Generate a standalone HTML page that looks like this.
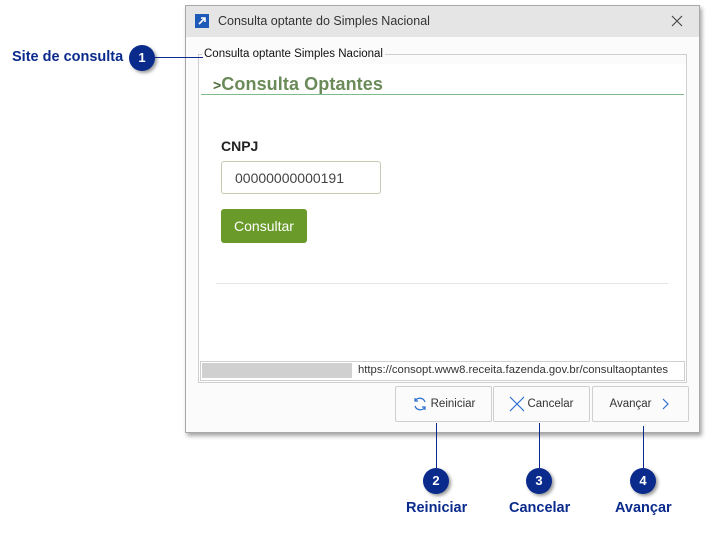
<!DOCTYPE html>
<html><head><style>
*{margin:0;padding:0;box-sizing:border-box}
body{width:723px;height:535px;background:#fff;position:relative;font-family:"Liberation Sans",sans-serif;overflow:hidden}
.a{position:absolute}
.dlg{left:185px;top:5px;width:515px;height:428px;background:#fbfbfb;border:1px solid #a8a8a8;box-shadow:2px 3px 4px rgba(0,0,0,.35)}
.tb{left:0;top:0;width:513px;height:31px;background:#e5e5e5}
.bub{width:26px;height:26px;border-radius:50%;background:#0a2a8c;color:#fff;font-weight:bold;font-size:13px;text-align:center;line-height:26px;box-shadow:2px 2px 3px rgba(0,0,0,.4)}
.lbl{color:#0a2a8c;font-weight:bold;font-size:14.5px}
.btn{top:381px;height:36px;background:#fbfbfb;border:1px solid #cfcfcf;border-radius:2px;font-size:11.5px;color:#333;display:flex;align-items:center;justify-content:center}
.vl{width:1px;background:#0a2a8c}
</style></head><body>
<div class="a dlg">
 <div class="a tb"></div>
 <div class="a" style="left:9px;top:8px;width:14px;height:14px;background:#1e5bb8"><svg width="14" height="14"><path d="M4 10 L10 4 M6 4 H10 V8" stroke="#fff" stroke-width="1.6" fill="none"/></svg></div>
 <div class="a" style="left:32px;top:8px;font-size:12.5px;color:#333">Consulta optante do Simples Nacional</div>
 <svg class="a" style="left:485px;top:9px" width="12" height="12"><path d="M1 1L11 11M11 1L1 11" stroke="#444" stroke-width="1.1"/></svg>
 <div class="a" style="left:12px;top:48px;width:489px;height:329px;border:1px solid #cfcfcf"></div>
 <div class="a" style="left:13px;top:58px;width:487px;height:318px;background:#fff"></div>
 <div class="a" style="left:16px;top:42px;background:#fbfbfb;padding:0 2px;font-size:11.5px;color:#111">Consulta optante Simples Nacional</div>
 <div class="a" style="left:27px;top:68px;font-size:18px;font-weight:bold;color:#6b8a5a;letter-spacing:0.1px"><span style="font-size:14px;color:#4a6a3a">&gt;</span>Consulta Optantes</div>
 <div class="a" style="left:15px;top:88px;width:483px;height:1px;background:#7fba88"></div>
 <div class="a" style="left:35px;top:132px;font-size:14px;font-weight:bold;color:#222">CNPJ</div>
 <div class="a" style="left:35px;top:155px;width:160px;height:33px;border:1px solid #c3ccb3;border-radius:3px;background:#fff;font-size:14px;color:#444;padding:8px 13px">00000000000191</div>
 <div class="a" style="left:35px;top:203px;width:86px;height:34px;background:#6a9a2a;border-radius:3px;color:#fff;font-size:14px;text-align:center;line-height:34px">Consultar</div>
 <div class="a" style="left:30px;top:277px;width:452px;height:1px;background:#e5e5e5"></div>
 <div class="a" style="left:14px;top:355px;width:485px;height:20px;border:1px solid #d0d0d0;background:#fff"></div>
 <div class="a" style="left:16px;top:357px;width:150px;height:15px;background:#d0d0d0"></div>
 <div class="a" style="left:172px;top:358px;font-size:11.3px;color:#333">https://consopt.www8.receita.fazenda.gov.br/consultaoptantes</div>
</div>
<div class="a btn" style="left:395px;top:386px;width:97px"><svg width="16" height="16" style="margin-right:3px"><path d="M13 6A5.5 5.5 0 0 0 3 5M3 10A5.5 5.5 0 0 0 13 11M3 2V5H6M13 14V11H10" stroke="#2a6fd0" stroke-width="1.2" fill="none"/></svg>Reiniciar</div>
<div class="a btn" style="left:493px;top:386px;width:97px"><svg width="16" height="16" style="margin-right:2px"><path d="M1 1L15 15M15 1L1 15" stroke="#2a6fd0" stroke-width="1.2"/></svg>Cancelar</div>
<div class="a btn" style="left:592px;top:386px;width:97px">Avançar<svg width="10" height="12" style="margin-left:10px"><path d="M2 1L7 6L2 11" stroke="#2a6fd0" stroke-width="1.2" fill="none"/></svg></div>
<div class="a lbl" style="left:12px;top:49px">Site de consulta</div>
<div class="a bub" style="left:129px;top:45px">1</div>
<div class="a" style="left:155px;top:57px;width:48px;height:1px;background:#0a2a8c"></div>
<div class="a vl" style="left:436px;top:423px;height:45px"></div>
<div class="a vl" style="left:539px;top:423px;height:45px"></div>
<div class="a vl" style="left:643px;top:426px;height:42px"></div>
<div class="a bub" style="left:423px;top:468px">2</div>
<div class="a bub" style="left:526px;top:468px">3</div>
<div class="a bub" style="left:630px;top:468px">4</div>
<div class="a lbl" style="left:406px;top:500px">Reiniciar</div>
<div class="a lbl" style="left:509px;top:500px">Cancelar</div>
<div class="a lbl" style="left:615px;top:500px">Avançar</div>
</body></html>
